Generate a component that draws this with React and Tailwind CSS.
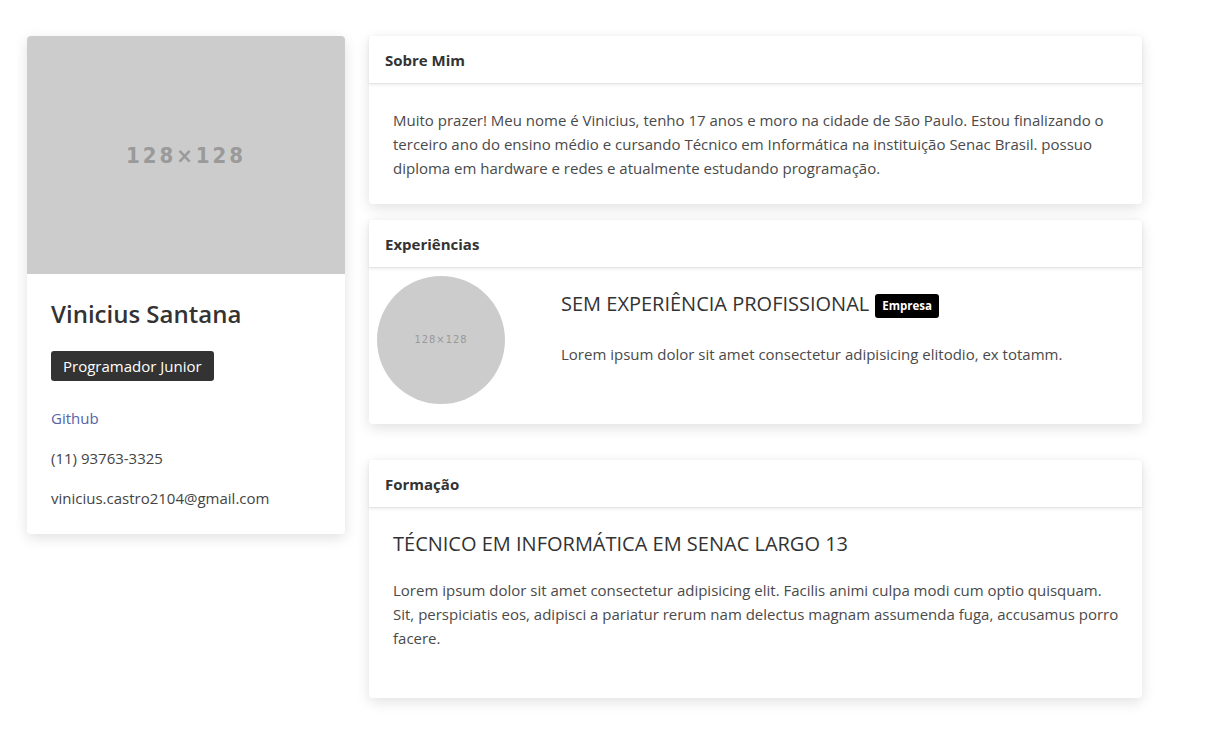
export default function App() {
  const font = { fontFamily: '"Open Sans", "Noto Sans", sans-serif' };
  const Card = ({ title, children, className = "" }) => (
    <div className={"bg-white rounded-[4px] shadow-[0_4px_14px_rgba(0,0,0,0.12)] " + className}>
      <div className="h-[48px] flex items-center px-4 pt-[1px] border-b border-[#e6e6e6] shadow-[0_1px_3px_rgba(0,0,0,0.08)]">
        <span className="text-[15px] font-bold text-[#333]">{title}</span>
      </div>
      {children}
    </div>
  );
  return (
    <div className="min-h-[732px] bg-white" style={font}>
      <div className="flex items-start pt-[36px] pl-[27px] gap-6">
        <div className="w-[318px] bg-white rounded-[4px] shadow-[0_4px_14px_rgba(0,0,0,0.12)] overflow-hidden">
          <div className="h-[238px] bg-[#cccccc] flex items-center justify-center">
            <span className="text-[#9a9a9a] text-[22px] font-bold tracking-[3px]" style={{ fontFamily: '"DejaVu Sans Condensed", "Liberation Sans Narrow", sans-serif' }}>128×128</span>
          </div>
          <div className="px-6 pt-[25px] pb-[24px]">
            <div className="text-[24px] font-semibold text-[#333] leading-[30px]">Vinicius Santana</div>
            <div className="mt-[22px] inline-block bg-[#333] text-white text-[15px] px-3 h-[30px] leading-[30px] rounded-[3px]">Programador Junior</div>
            <div className="mt-[25px] text-[15px] text-[#5563a8] leading-[24px]">Github</div>
            <div className="mt-[16px] text-[15px] text-[#444] leading-[24px]">(11) 93763-3325</div>
            <div className="mt-[16px] text-[15px] text-[#444] leading-[24px]">vinicius.castro2104@gmail.com</div>
          </div>
        </div>
        <div className="w-[773px] flex flex-col">
          <Card title="Sobre Mim">
            <p className="pl-6 pr-4 pt-[24px] pb-[24px] text-[15px] leading-[24px] text-[#4a4a4a]">
              Muito prazer! Meu nome é Vinicius, tenho 17 anos e moro na cidade de São Paulo. Estou finalizando o terceiro ano do ensino médio e cursando Técnico em Informática na instituição Senac Brasil. possuo diploma em hardware e redes e atualmente estudando programação.
            </p>
          </Card>
          <Card title="Experiências" className="mt-4">
            <div className="flex p-2 pb-[20px]">
              <div className="w-[128px] h-[128px] rounded-full bg-[#cccccc] flex items-center justify-center shrink-0">
                <span className="text-[#999] text-[11px] tracking-[1px]" style={{ fontFamily: '"DejaVu Sans Condensed", "Liberation Sans Narrow", sans-serif' }}>128×128</span>
              </div>
              <div className="ml-[56px] pt-[14px]">
                <div className="flex items-center">
                  <span className="text-[20px] text-[#333] leading-[28px]">SEM EXPERIÊNCIA PROFISSIONAL</span>
                  <span className="ml-[6px] mt-[4px] bg-black text-white text-[11.5px] font-bold px-[7px] h-[24px] leading-[24px] rounded-[3px]">Empresa</span>
                </div>
                <p className="mt-[24px] text-[15px] leading-[24px] text-[#4a4a4a]">Lorem ipsum dolor sit amet consectetur adipisicing elitodio, ex totamm.</p>
              </div>
            </div>
          </Card>
          <Card title="Formação" className="mt-[36px]">
            <div className="pl-6 pr-4 pt-[22px] pb-[48px]">
              <div className="text-[20px] text-[#333] leading-[28px]">TÉCNICO EM INFORMÁTICA EM SENAC LARGO 13</div>
              <p className="mt-[20px] text-[15px] leading-[24px] text-[#4a4a4a]">
                Lorem ipsum dolor sit amet consectetur adipisicing elit. Facilis animi culpa modi cum optio quisquam. Sit, perspiciatis eos, adipisci a pariatur rerum nam delectus magnam assumenda fuga, accusamus porro facere.
              </p>
            </div>
          </Card>
        </div>
      </div>
    </div>
  );
}
